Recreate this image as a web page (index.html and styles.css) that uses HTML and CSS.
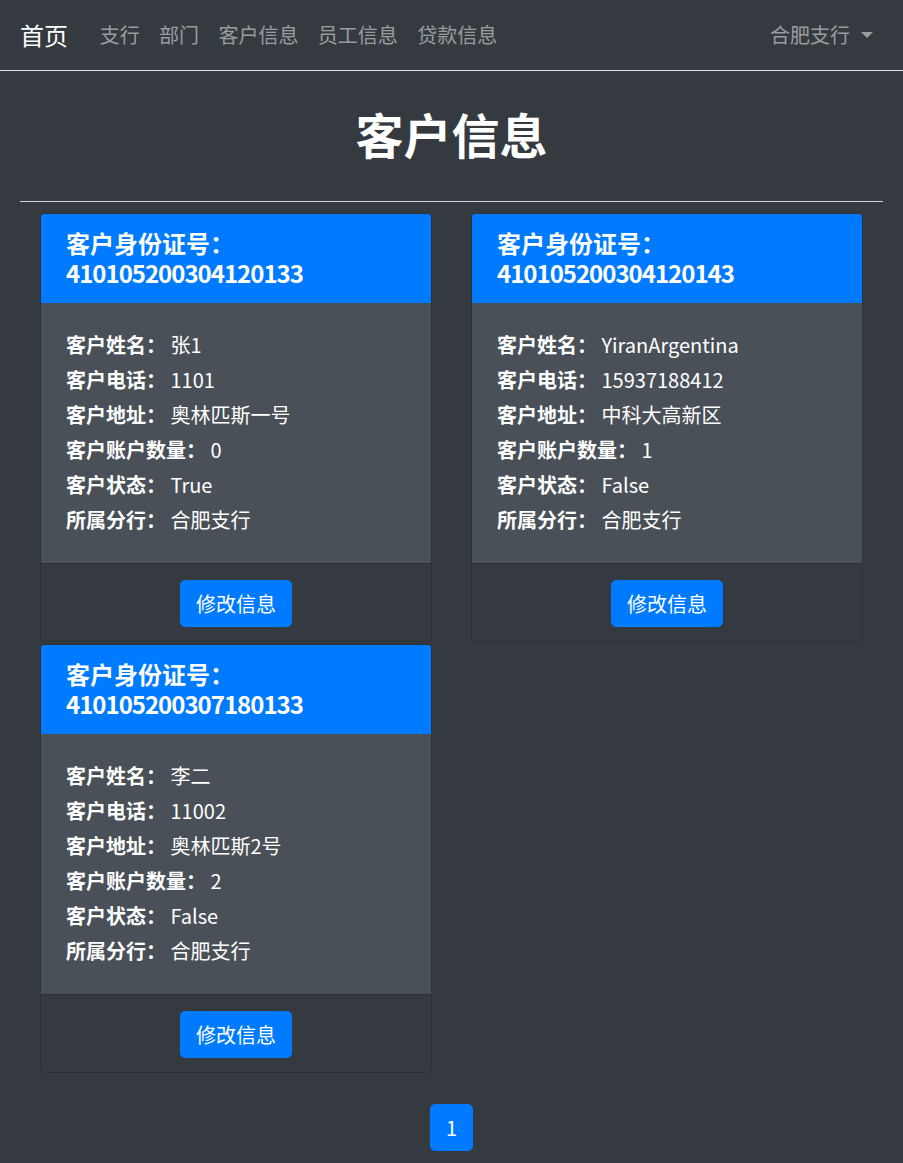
FILE: index.html
```html
<!DOCTYPE html>
<html lang="zh">
<head>
<meta charset="utf-8">
<title>客户信息</title>
<link rel="stylesheet" href="styles.css">
</head>
<body>
<nav class="navbar">
  <a class="brand" href="#">首页</a>
  <ul class="nav-links">
    <li><a href="#">支行</a></li>
    <li><a href="#">部门</a></li>
    <li><a href="#">客户信息</a></li>
    <li><a href="#">员工信息</a></li>
    <li><a href="#">贷款信息</a></li>
  </ul>
  <a class="dropdown" href="#">合肥支行<span class="caret"></span></a>
</nav>
<main>
  <h1 class="title">客户信息</h1>
  <hr class="divider">
  <div class="cards">
    <div class="card">
      <div class="card-header"><span class="hline">客户身份证号：</span><span class="hline idno">410105200304120133</span></div>
      <div class="card-body">
        <p class="row"><span class="label">客户姓名：</span> 张1</p>
        <p class="row"><span class="label">客户电话：</span> 1101</p>
        <p class="row"><span class="label">客户地址：</span> 奥林匹斯一号</p>
        <p class="row"><span class="label">客户账户数量：</span> 0</p>
        <p class="row"><span class="label">客户状态：</span> True</p>
        <p class="row"><span class="label">所属分行：</span> 合肥支行</p>
      </div>
      <div class="card-footer"><a class="btn" href="#">修改信息</a></div>
    </div>
    <div class="card">
      <div class="card-header"><span class="hline">客户身份证号：</span><span class="hline idno">410105200304120143</span></div>
      <div class="card-body">
        <p class="row"><span class="label">客户姓名：</span> YiranArgentina</p>
        <p class="row"><span class="label">客户电话：</span> 15937188412</p>
        <p class="row"><span class="label">客户地址：</span> 中科大高新区</p>
        <p class="row"><span class="label">客户账户数量：</span> 1</p>
        <p class="row"><span class="label">客户状态：</span> False</p>
        <p class="row"><span class="label">所属分行：</span> 合肥支行</p>
      </div>
      <div class="card-footer"><a class="btn" href="#">修改信息</a></div>
    </div>
    <div class="card">
      <div class="card-header"><span class="hline">客户身份证号：</span><span class="hline idno">410105200307180133</span></div>
      <div class="card-body">
        <p class="row"><span class="label">客户姓名：</span> 李二</p>
        <p class="row"><span class="label">客户电话：</span> 11002</p>
        <p class="row"><span class="label">客户地址：</span> 奥林匹斯2号</p>
        <p class="row"><span class="label">客户账户数量：</span> 2</p>
        <p class="row"><span class="label">客户状态：</span> False</p>
        <p class="row"><span class="label">所属分行：</span> 合肥支行</p>
      </div>
      <div class="card-footer"><a class="btn" href="#">修改信息</a></div>
    </div>
  </div>
  <div class="pagination"><a class="page" href="#">1</a></div>
</main>
</body>
</html>
```
FILE: styles.css
```css
* { box-sizing: border-box; }
html, body {
  margin: 0;
  background: #343a40;
  color: #f8f9fa;
  font-family: "Noto Sans CJK SC", "Noto Sans", sans-serif;
}
a { text-decoration: none; }

.navbar {
  display: flex;
  align-items: center;
  height: 71px;
  padding: 0 20px;
  border-bottom: 1px solid #dee2e6;
}
.brand {
  color: #fff;
  font-size: 24px;
  line-height: 36px;
  margin-right: 22px;
}
.nav-links {
  display: flex;
  list-style: none;
  margin: 0;
  padding: 0;
  flex: 1;
}
.nav-links a {
  display: block;
  padding: 0 9.7px;
  font-size: 20px;
  line-height: 30px;
  color: rgba(255, 255, 255, 0.5);
}
.dropdown {
  display: flex;
  align-items: center;
  padding: 0 10px;
  font-size: 20px;
  line-height: 30px;
  color: rgba(255, 255, 255, 0.5);
}
.caret {
  display: inline-block;
  margin-left: 11px;
  width: 0;
  height: 0;
  border-top: 6px solid rgba(255, 255, 255, 0.5);
  border-left: 6px solid transparent;
  border-right: 6px solid transparent;
}

.title {
  margin: 33px 0 0;
  text-align: center;
  font-size: 48px;
  font-weight: 600;
  line-height: 58px;
  color: #fff;
}
.divider {
  margin: 39px 20px 11px;
  border: 0;
  border-top: 1px solid #ced4da;
  height: 0;
}

.cards {
  display: grid;
  grid-template-columns: 392px 392px;
  column-gap: 39px;
  row-gap: 2px;
  padding: 0 40px;
  align-items: start;
}
.card {
  border: 1px solid rgba(0, 0, 0, 0.125);
  border-radius: 4px;
  overflow: hidden;
}
.card-header {
  background: #007bff;
  color: #fff;
  font-size: 24px;
  font-weight: 600;
  line-height: 30px;
  padding: 14px 25px 15px;
}
.hline { display: block; }
.idno { letter-spacing: -1px; }
.card-body {
  background: #495057;
  padding: 24px 25px 26px;
}
.row {
  margin: 0;
  font-size: 20px;
  line-height: 35px;
  color: #fff;
}
.label { font-weight: 700; }
.card-footer {
  border-top: 1px solid rgba(0, 0, 0, 0.2);
  padding: 16px 0 14px;
  display: flex;
  justify-content: center;
}
.btn {
  display: inline-block;
  background: #007bff;
  border: 1px solid #007bff;
  border-radius: 5px;
  color: #fff;
  font-size: 20px;
  line-height: 29px;
  padding: 8px 15px;
}

.pagination {
  display: flex;
  justify-content: center;
  margin: 31px 0 12px;
}
.page {
  display: block;
  background: #007bff;
  border: 1px solid #007bff;
  border-radius: 5px;
  color: #fff;
  font-size: 20px;
  line-height: 29px;
  padding: 8px 15px;
}
```
